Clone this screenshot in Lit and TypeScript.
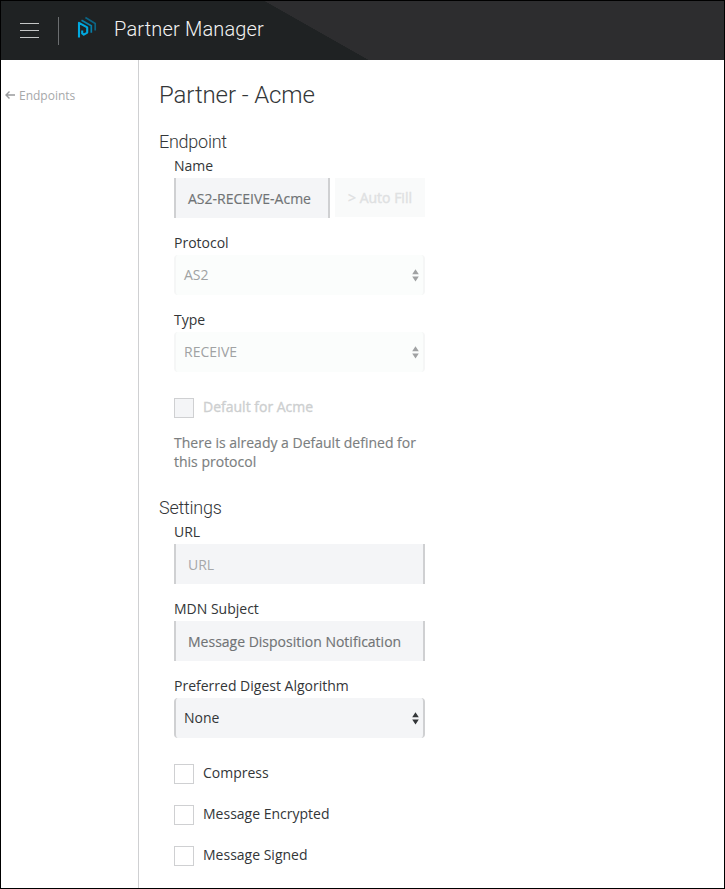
import { LitElement, html, svg, css } from "lit";
import { customElement, property } from "lit/decorators.js";
import { classMap } from "lit/directives/class-map.js";

const base = css`
  :host { display: block; box-sizing: border-box; font: 14px/24px "Open Sans", sans-serif; color: #333638; }
  *, *::before { box-sizing: border-box; }
`;

@customElement("pm-header")
class PmHeader extends LitElement {
  static styles = [base, css`
    .bar { height: 59px; display: flex; align-items: center; padding-left: 19px;
      background: linear-gradient(to bottom left, #2d2d2f 50%, #1f2223 50.4%) 264px 0 / 104px 59px no-repeat,
        linear-gradient(90deg, #1f2223 265px, #2d2d2f 265px); }
    .menu { width: 19px; height: 15px; display: block; }
    .divider { width: 1px; height: 28px; margin: 0 18px 0 19px; background: #6b6e70; }
    .logo { width: 20px; height: 24px; display: block; margin-bottom: 7px; }
    .title { font: 300 20px/28px Roboto, sans-serif; letter-spacing: 0.17px; color: #f2f2f2; margin: 0 0 3px 17px; }
  `];
  render() {
    return html`<header class="bar">
      <svg class="menu" viewBox="0 0 19 15"><path d="M0 .5H19M0 7.5H19M0 14.5H19" stroke="#c4c6c6" fill="none"/></svg>
      <span class="divider"></span>
      <svg class="logo" viewBox="77 15 20 24" fill="none" stroke-width="1.7">
        <path d="M79 37.6V22.8L87.2 27.4V32.6L83.8 34.6L82.2 33.4V30.6" stroke="#00a9e0" stroke-width="2.1" stroke-linejoin="round"/>
        <path d="M81.5 20.2L91.3 25.8V32.8" stroke="#087fa8"/>
        <path d="M85.4 17.5L95.2 23.4V30.4" stroke="#0b6484"/>
      </svg>
      <span class="title">Partner Manager</span>
    </header>`;
  }
}

@customElement("pm-input")
class PmInput extends LitElement {
  @property() value = "";
  @property() placeholder = "";
  static styles = [base, css`
    .box { height: 40px; line-height: 41px; padding: 0 12px; background: #f4f5f7; border: solid #cfd0d2; border-width: 0 2px; color: #707375; white-space: nowrap; -webkit-text-stroke: 0.15px; }
    .empty { color: #a6a8aa; -webkit-text-stroke: 0; }
  `];
  render() {
    return html`<div class=${classMap({ box: true, empty: !this.value })}>${this.value || this.placeholder}</div>`;
  }
}

@customElement("pm-select")
class PmSelect extends LitElement {
  @property() value = "";
  @property({ type: Boolean }) disabled = false;
  static styles = [base, css`
    .box { height: 40px; line-height: 40px; display: flex; align-items: center; justify-content: space-between; padding: 0 4px 0 8px; background: #f4f5f7; border: solid #cfd0d2; border-width: 0 2px; border-radius: 4px; }
    .off { background: #fbfdfc; border-color: #f5f6f6; color: #a0a2a3; }
    .arrows { width: 7px; height: 13px; display: block; fill: currentColor; }
  `];
  render() {
    return html`<div class=${classMap({ box: true, off: this.disabled })}>
      <span>${this.value}</span>
      <svg class="arrows" viewBox="0 0 7 13">${svg`<path d="M3.5 0.3L6.8 5.2H.2ZM.2 7.6H6.8L3.5 12.5Z"/>`}</svg>
    </div>`;
  }
}

@customElement("pm-check")
class PmCheck extends LitElement {
  @property() label = "";
  @property({ type: Boolean }) disabled = false;
  static styles = [base, css`
    .row { display: flex; height: 20px; gap: 9px; line-height: 18px; }
    .tick { width: 20px; height: 20px; border: 1px solid #cfd0d2; background: #fff; }
    .off { color: #cdcfd0; -webkit-text-stroke: 0.35px; }
    .off .tick { background: #f4f5f7; }
  `];
  render() {
    return html`<div class=${classMap({ row: true, off: this.disabled })}><span class="tick"></span><span>${this.label}</span></div>`;
  }
}

@customElement("app-root")
class AppRoot extends LitElement {
  static styles = [base, css`
    :host { height: 889px; border: 1px solid #000; background: #fff; overflow: hidden; }
    .body { display: flex; height: 828px; }
    .side { width: 138px; border-right: 1px solid #cfd0d2; padding: 24px 0 0 4px; }
    .back { display: flex; align-items: center; gap: 4px; font-size: 12px; color: #a6a8aa; }
    .arrow { width: 10px; height: 8px; display: block; margin-bottom: 2px; }
    .main { padding: 20px 0 0 20px; }
    .h1 { font: 300 24px/30px Roboto, sans-serif; letter-spacing: -0.1px; margin: 0; }
    .h2 { font: 300 18px/24px Roboto, sans-serif; letter-spacing: -0.26px; margin: 0; }
    .first { margin-top: 20px; }
    .second { margin-top: 25px; }
    .form { width: 251px; margin-left: 15px; }
    .field { margin-bottom: 13px; }
    .pair { display: grid; grid-template-columns: 156px 90px; gap: 5px; }
    .fill { height: 39px; line-height: 39px; text-align: center; background: #f9fafa; color: #dfe1e2; -webkit-text-stroke: 0.4px; }
    .hint { margin: 15px 0 0; line-height: 19px; color: #7b7e80; -webkit-text-stroke: 0.15px; }
    .checks { display: grid; gap: 21px; margin-top: 26px; }
  `];
  render() {
    return html`
      <pm-header></pm-header>
      <div class="body">
        <nav class="side"><div class="back">
          <svg class="arrow" viewBox="0 0 10 8"><path d="M10 4H1M4.5 .5L1 4L4.5 7.5" fill="none" stroke="#999b9d" stroke-width="1.4"/></svg>
          <span>Endpoints</span></div></nav>
        <main class="main">
          <h1 class="h1">Partner - Acme</h1>
          <h2 class="h2 first">Endpoint</h2>
          <section class="form">
            <div class="field">Name
              <div class="pair"><pm-input value="AS2-RECEIVE-Acme"></pm-input><div class="fill">&gt; Auto Fill</div></div>
            </div>
            <div class="field">Protocol<pm-select value="AS2" disabled></pm-select></div>
            <div class="field">Type<pm-select value="RECEIVE" disabled></pm-select></div>
            <div class="checks"><pm-check label="Default for Acme" disabled></pm-check></div>
            <p class="hint">There is already a Default defined for this protocol</p>
          </section>
          <h2 class="h2 second">Settings</h2>
          <section class="form">
            <div class="field">URL<pm-input placeholder="URL"></pm-input></div>
            <div class="field">MDN Subject<pm-input value="Message Disposition Notification"></pm-input></div>
            <div class="field">Preferred Digest Algorithm<pm-select value="None"></pm-select></div>
            <div class="checks">
              <pm-check label="Compress"></pm-check>
              <pm-check label="Message Encrypted"></pm-check>
              <pm-check label="Message Signed"></pm-check>
            </div>
          </section>
        </main>
      </div>`;
  }
}
